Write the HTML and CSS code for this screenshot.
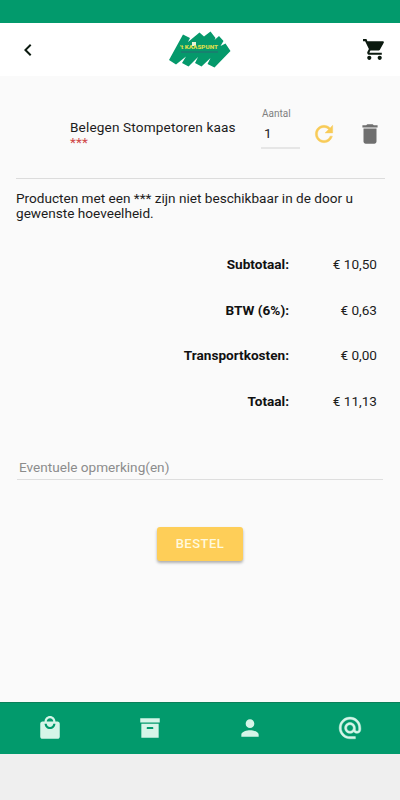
FILE: index.html
```html
<!DOCTYPE html>
<html lang="nl">
<head>
    <meta charset="UTF-8">
    <meta name="viewport" content="width=device-width, initial-scale=1.0">
    <title>'t Kaaspunt - Winkelwagen</title>
    <link rel="stylesheet" href="styles.css">
</head>
<body>
    <div class="statusbar"></div>

    <header class="header">
        <svg class="icon-back" viewBox="0 0 24 24"><path d="M15.41 7.41L14 6l-6 6 6 6 1.41-1.41L10.83 12z"/></svg>
        <svg class="logo" viewBox="0 0 64 38">
            <path class="logo-green" d="M1 29L15 3.500 22 7l-2 4L31.500 1.500 36 5.500 42.500.5 47.500 7l-1 2L51 5l4.500 5-3 5 5-2.500L62.500 20 46.500 36.500 39.500 33l3-6-9 8.500L27 32l3-6-9.500 9.500L14 32l4-6.500L8 33.500z"/>
            <path class="logo-line" d="M13 21h37"/>
            <path class="logo-cheese" d="M24 11h4v4h-4z"/>
            <text class="logo-text" x="12" y="17.500" textLength="38" lengthAdjust="spacingAndGlyphs">'t KAASPUNT</text>
        </svg>
        <svg class="icon-cart" viewBox="0 0 24 24">
            <path class="cart-basket" d="M5.500 5h15l-4 7H8.500z"/>
            <path d="M7 18c-1.100 0-1.990.9-1.990 2S5.900 22 7 22s2-.9 2-2-.9-2-2-2zM1 2v2h2l3.600 7.590-1.350 2.450c-.16.280-.25.610-.25.960 0 1.100.9 2 2 2h12v-2H7.420c-.14 0-.25-.11-.25-.25l.03-.12.9-1.630h7.450c.75 0 1.410-.41 1.750-1.030l3.580-6.490c.08-.14.12-.31.12-.48 0-.55-.45-1-1-1H5.210l-.94-2H1zm16 16c-1.100 0-1.990.9-1.990 2s.89 2 1.990 2 2-.9 2-2-.9-2-2-2z"/>
        </svg>
    </header>

    <main class="content">
        <div class="product">
            <div class="product-name">Belegen Stompetoren kaas<span class="stars">***</span></div>
            <div class="amount">
                <label class="amount-label" for="amount">Aantal</label>
                <input class="amount-input" type="text" id="amount" value="1">
            </div>
            <svg class="icon-refresh" viewBox="0 0 24 24"><path d="M17.650 6.350C16.200 4.900 14.210 4 12 4c-4.420 0-7.990 3.580-7.990 8s3.570 8 7.990 8c3.730 0 6.840-2.550 7.730-6h-2.080c-.82 2.330-3.040 4-5.650 4-3.310 0-6-2.690-6-6s2.690-6 6-6c1.660 0 3.140.69 4.220 1.780L13 11h7V4l-2.350 2.350z"/></svg>
            <svg class="icon-delete" viewBox="0 0 24 24"><path d="M6 19c0 1.100.9 2 2 2h8c1.100 0 2-.9 2-2V7H6v12zM19 4h-3.500l-1-1h-5l-1 1H5v2h14V4z"/></svg>
        </div>

        <p class="notice">Producten met een *** zijn niet beschikbaar in de door u gewenste hoeveelheid.</p>

        <div class="totals">
            <strong>Subtotaal:</strong><span>€ 10,50</span>
            <strong>BTW (6%):</strong><span>€ 0,63</span>
            <strong>Transportkosten:</strong><span>€ 0,00</span>
            <strong>Totaal:</strong><span>€ 11,13</span>
        </div>

        <input class="remark" type="text" placeholder="Eventuele opmerking(en)">
        <button class="order" type="submit">BESTEL</button>
    </main>

    <nav class="navbar">
        <a class="nav-item"><svg viewBox="0 0 24 24"><path d="M19 6h-2c0-2.760-2.240-5-5-5S7 3.240 7 6H5c-1.100 0-1.990.9-1.990 2L3 20c0 1.100.9 2 2 2h14c1.100 0 2-.9 2-2V8c0-1.100-.9-2-2-2zm-7-3c1.660 0 3 1.340 3 3H9c0-1.660 1.340-3 3-3zm0 10c-2.760 0-5-2.240-5-5h2c0 1.660 1.340 3 3 3s3-1.340 3-3h2c0 2.760-2.240 5-5 5z"/></svg></a>
        <a class="nav-item"><svg viewBox="0 0 24 24"><path d="M3 3h18v4H3zM4 8h16v13H4zM9.500 11a.5.5 0 0 0-.5.5V13h6v-1.500a.5.5 0 0 0-.5-.5z" fill-rule="evenodd"/></svg></a>
        <a class="nav-item"><svg viewBox="0 0 24 24"><path d="M12 12c2.210 0 4-1.790 4-4s-1.790-4-4-4-4 1.790-4 4 1.790 4 4 4zm0 2c-2.670 0-8 1.340-8 4v2h16v-2c0-2.660-5.330-4-8-4z"/></svg></a>
        <a class="nav-item nav-contact"><svg viewBox="0 0 24 24"><path d="M12 1.950c-5.520 0-10 4.480-10 10s4.480 10 10 10h5v-2h-5c-4.340 0-8-3.660-8-8s3.660-8 8-8 8 3.660 8 8v1.430c0 .79-.71 1.570-1.500 1.570s-1.500-.78-1.500-1.570v-1.430c0-2.760-2.240-5-5-5s-5 2.240-5 5 2.240 5 5 5c1.380 0 2.640-.56 3.540-1.470.65.890 1.770 1.470 2.960 1.470 1.970 0 3.500-1.600 3.500-3.570v-1.430c0-5.520-4.480-10-10-10zm0 13c-1.660 0-3-1.340-3-3s1.340-3 3-3 3 1.340 3 3-1.340 3-3 3z"/></svg></a>
    </nav>
    <div class="bottombar"></div>
</body>
</html>
```
FILE: styles.css
```css
* { box-sizing: border-box; }
body { font-family: Roboto, sans-serif; font-size: 13.6px; line-height: 15px; color: #1c1c1c; background-color: #fafafa; margin: 0; height: 100vh; display: flex; flex-direction: column; overflow: hidden; }
svg { display: block; flex: none; }

.statusbar { height: 23px; background-color: #029a6c; flex: none; }
.header { height: 53px; padding: 0 13px 0 16px; background-color: #ffffff; display: flex; justify-content: space-between; align-items: center; flex: none; }
.icon-back { width: 24px; height: 24px; fill: #0c1a10; }
.icon-cart { width: 25px; height: 25px; fill: #0c1a10; }
.cart-basket { fill: #123f1c; }
.logo { width: 64px; height: 38px; margin-right: 2px; }
.logo-green { fill: #05996b; }
.logo-line { stroke: #18806f; stroke-width: 2; }
.logo-cheese { fill: #e9f3d8; }
.logo-text { font-size: 6px; font-weight: 900; fill: #d9df4c; }

.content { flex: 1; padding: 0 15px 0 16px; display: flex; flex-direction: column; }
.product { height: 103px; padding-left: 54px; border-bottom: 1px solid #dcdcdc; display: flex; align-items: flex-start; }
.product-name { width: 191px; padding-top: 44px; letter-spacing: 0.15px; }
.stars { display: block; color: #d04848; }
.amount { width: 39px; padding-top: 31px; }
.amount-label { display: block; padding-left: 1px; font-size: 10px; line-height: 14px; color: #808080; }
.amount-input { display: block; width: 39px; height: 28px; padding: 0 0 2px 3px; border: none; border-bottom: 2px solid #e6e6e6; background: none; font: inherit; color: inherit; }
.icon-refresh { width: 26px; height: 26px; margin: 45px 0 0 11px; fill: #f8cb58; stroke: #f8cb58; stroke-width: 0.4; }
.icon-delete { width: 26px; height: 26px; margin: 45px 0 0 20px; fill: #6f6f6f; }

.notice { margin: 12px -5px 0 0; }
.totals { margin: 21px 8px 0 0; display: grid; grid-template-columns: 273px 1fr; grid-auto-rows: 45.5px; align-items: center; text-align: right; }
.totals strong { font-weight: 700; color: #111111; }

.remark { width: 366px; height: 26px; margin: 30px 0 0 1px; padding: 0 2px; border: none; border-bottom: 1px solid #dedede; background: none; font: inherit; }
.remark::placeholder { color: #8c8c8c; }
.order { width: 86px; height: 34px; margin: 47px 1px 0 0; padding: 0 0 2px; align-self: center; border: none; border-radius: 3px; background-color: #fece58; box-shadow: 0 2px 3px rgba(0, 0, 0, 0.3); font: 500 13px Roboto, sans-serif; letter-spacing: 0.5px; color: #fff9dd; }

.navbar { height: 52px; padding-bottom: 2px; background-color: #029a6c; border-top: 1px solid #0a8059; display: flex; flex: none; }
.nav-item { flex: 1; display: flex; justify-content: center; align-items: center; }
.nav-item svg { width: 26px; height: 26px; fill: #d5f5e8; }
.nav-contact svg { stroke: #d5f5e8; stroke-width: 0.4; }
.bottombar { height: 46px; background-color: #efefef; flex: none; }
```
